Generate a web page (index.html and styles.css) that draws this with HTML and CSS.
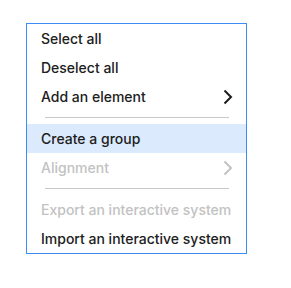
FILE: index.html
```html
<!DOCTYPE html>
<html>
<head>
<meta charset="utf-8">
<link rel="stylesheet" href="styles.css">
</head>
<body>
<div class="menu">
  <div class="item">Select all</div>
  <div class="item">Deselect all</div>
  <div class="item has-sub">Add an element
    <svg class="chev" width="10" height="16" viewBox="0 0 10 16"><path d="M1.5 1.5 L8 8 L1.5 14.5" fill="none" stroke="currentColor" stroke-width="2"/></svg>
  </div>
  <div class="sep"></div>
  <div class="item active">Create a group</div>
  <div class="item has-sub disabled">Alignment
    <svg class="chev" width="10" height="16" viewBox="0 0 10 16"><path d="M1.5 1.5 L8 8 L1.5 14.5" fill="none" stroke="currentColor" stroke-width="2"/></svg>
  </div>
  <div class="sep"></div>
  <div class="item disabled">Export an interactive system</div>
  <div class="item">Import an interactive system</div>
</div>
</body>
</html>
```
FILE: styles.css
```css
html, body {
  margin: 0;
  padding: 0;
  background: #ffffff;
}
body {
  padding: 23px 0 0 26px;
  font-family: Inter, "Noto Sans", sans-serif;
}
.menu {
  width: 219px;
  border: 1px solid #3d8bf5;
  background: #ffffff;
  display: flex;
  flex-direction: column;
}
.item {
  height: 29px;
  display: flex;
  align-items: center;
  justify-content: space-between;
  padding: 0 13px 0 14px;
  font-size: 14px;
  font-weight: 500;
  color: #202020;
  white-space: nowrap;
}
.item.active {
  background: #dbeafd;
}
.item.disabled {
  color: #c2c2c2;
}
.chev {
  display: block;
  color: #1c1c1c;
}
.item.disabled .chev {
  color: #c2c2c2;
}
.sep {
  height: 1px;
  background: #c8c8c8;
  margin: 6px 17px 6px 18px;
}
```
